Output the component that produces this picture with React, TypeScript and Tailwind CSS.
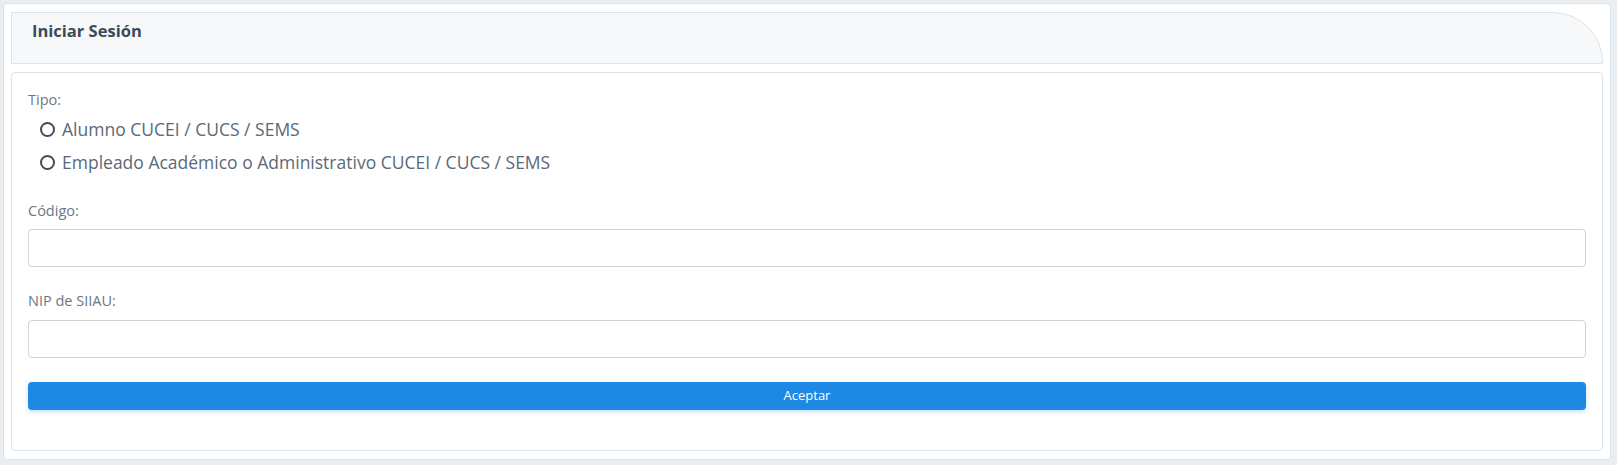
import React from "react";

function Radio({ label }: { label: string }) {
  return (
    <label className="flex items-center h-[33px] pl-[12px]">
      <span className="w-[15px] h-[15px] rounded-full border-[2px] border-[#454b52] bg-white shrink-0" />
      <span className="ml-[7px] text-[17.5px] text-[#5b6977] leading-none">{label}</span>
    </label>
  );
}

export default function App() {
  return (
    <div className="w-[1617px] h-[465px] bg-[#e8eef1] pl-[3px] pt-[3px] pr-[6px] pb-[5px]" style={{ fontFamily: '"Open Sans", "Noto Sans", sans-serif' }}>
      <div className="h-[457px] bg-white border border-[#dce2e6] rounded-[4px] px-[7px] pt-[8px] pb-[8px] flex flex-col gap-[8px]">
        <div className="h-[52px] shrink-0 bg-[#f7f8fa] border border-[#dfe3e7] rounded-tr-[50px] flex items-center pl-[20px]">
          <h1 className="text-[16.5px] font-bold text-[#3b4a58] -mt-[14px]">Iniciar Sesión</h1>
        </div>
        <div className="flex-1 border border-[#dfe3e7] rounded-[4px] px-[16px] pt-[17px]">
          <div className="text-[14.5px] text-[#6b7785] leading-[20px]">Tipo:</div>
          <div className="mt-[3px]">
            <Radio label="Alumno CUCEI / CUCS / SEMS" />
            <Radio label="Empleado Académico o Administrativo CUCEI / CUCS / SEMS" />
          </div>
          <div className="mt-[22px] text-[14.5px] text-[#6b7785] leading-[20px]">Código:</div>
          <input className="mt-[8px] block w-full h-[38px] border border-[#ced4da] rounded-[4px] bg-white outline-none" />
          <div className="mt-[24px] text-[14.5px] text-[#6b7785] leading-[20px]">NIP de SIIAU:</div>
          <input type="password" className="mt-[9px] block w-full h-[38px] border border-[#ced4da] rounded-[4px] bg-white outline-none" />
          <button className="mt-[24px] block w-full h-[28px] rounded-[4px] bg-[#1e88e5] text-white text-[13px] font-medium shadow-[0_2px_4px_rgba(30,136,229,0.25)]">
            Aceptar
          </button>
        </div>
      </div>
    </div>
  );
}
